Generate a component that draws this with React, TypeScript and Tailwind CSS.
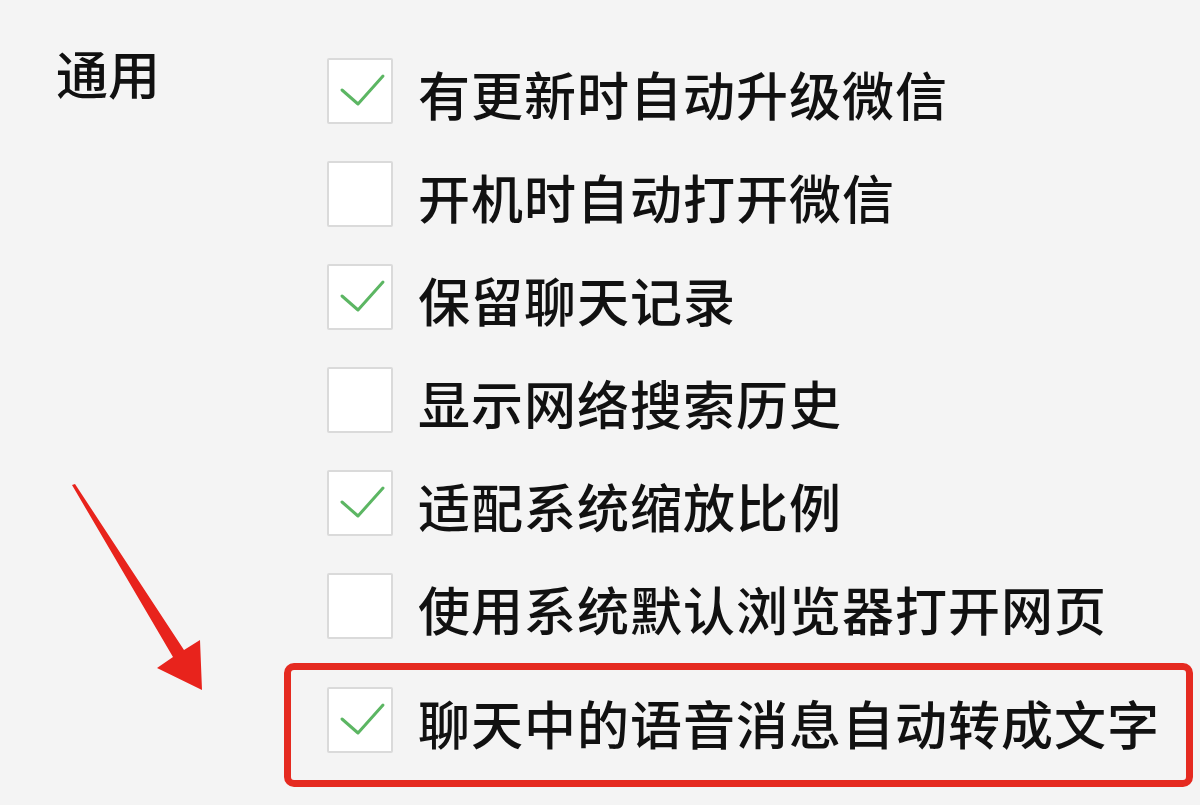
import React from "react";

const options = [
  { label: "有更新时自动升级微信", checked: true },
  { label: "开机时自动打开微信", checked: false },
  { label: "保留聊天记录", checked: true },
  { label: "显示网络搜索历史", checked: false },
  { label: "适配系统缩放比例", checked: true },
  { label: "使用系统默认浏览器打开网页", checked: false },
];

function CheckBox({ checked }: { checked: boolean }) {
  return (
    <div className="w-[66px] h-[66px] shrink-0 bg-white border-2 border-[#dadada] rounded-[2px]">
      {checked && (
        <svg width="62" height="62" viewBox="0 0 62 62">
          <polyline points="13,30 29,44 54,16" fill="none" stroke="#5cb663" strokeWidth="3" strokeLinecap="round" strokeLinejoin="round" />
        </svg>
      )}
    </div>
  );
}

function Row({ label, checked }: { label: string; checked: boolean }) {
  return (
    <div className="h-[103px] flex items-center gap-[25px]">
      <CheckBox checked={checked} />
      <span className="mt-[6px] text-[52px] leading-none tracking-[1px] font-medium text-[#111]">{label}</span>
    </div>
  );
}

export default function App() {
  return (
    <div
      className="w-[1200px] h-[805px] bg-[#f4f4f4] overflow-hidden relative flex"
      style={{ fontFamily: '"Noto Sans CJK SC", "Noto Sans", sans-serif' }}
    >
      <div className="w-[327px] shrink-0 pl-[56px] pt-[47px]">
        <span className="text-[52px] leading-none font-medium text-[#111]">通用</span>
      </div>

      <div className="flex flex-col pt-[39px]">
        {options.map((o) => (
          <Row key={o.label} label={o.label} checked={o.checked} />
        ))}
        <div className="mt-[6px] -ml-[43px] w-[909px] h-[124px] border-[7px] border-[#e52a20] rounded-[10px] pl-[36px] pb-[10px] flex items-center gap-[25px]">
          <CheckBox checked />
          <span className="mt-[6px] text-[52px] leading-none tracking-[1px] font-medium text-[#111]">聊天中的语音消息自动转成文字</span>
        </div>
      </div>

      {/* annotation arrow */}
      <svg className="absolute left-0 top-0 pointer-events-none" width="1200" height="805">
        <polygon
          points="72,485 75,484 184,650 200,640 202,690 157,668 173,657"
          fill="#e8231c"
        />
      </svg>
    </div>
  );
}
